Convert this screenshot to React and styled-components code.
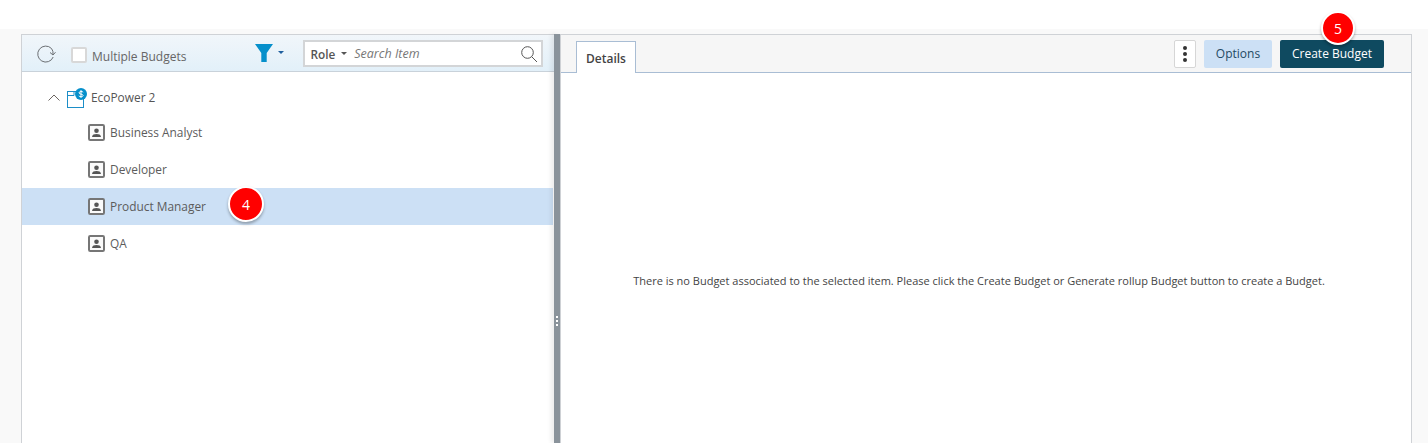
import React from "react";
import styled, { createGlobalStyle } from "styled-components";

const Global = createGlobalStyle`
  html, body { margin: 0; padding: 0; background: #fff; height: 100%; overflow: hidden; }
  body { font-family: "Open Sans", "Liberation Sans", sans-serif; color: #555; }
  * { box-sizing: border-box; }
`;
const Page = styled.div`display: flex; flex-direction: column; height: 443px; width: 1428px; overflow: hidden;`;
const TopStrip = styled.div`height: 29px; background: #fff; flex: none;`;
const Workspace = styled.div`flex: 1; display: flex; min-height: 0; background: #f9f9f9; padding: 5px 16px 0 21px;`;
const LeftPanel = styled.section`width: 533px; flex: none; display: flex; flex-direction: column; background: #fff; border: 1px solid #cfd2d6; border-right: none; border-bottom: none;`;
const LeftBar = styled.div`height: 37px; flex: none; display: flex; align-items: center; background: linear-gradient(to bottom, #f1f6fa, #e2f0f9); border-bottom: 1px solid #c9d2da; position: relative; padding-left: 15px;`;
const Check = styled.span`width: 16px; height: 16px; margin-left: 15px; margin-top: 4px; background: #fff; border: 2px solid #d8d8d8; border-radius: 2px;`;
const CheckLabel = styled.span`font-size: 12px; margin-left: 5px; margin-top: 7px; color: #666;`;
const FilterBtn = styled.div`margin-left: 69px; margin-top: -1px; display: flex; align-items: center; gap: 5px;`;
const Search = styled.div`width: 240px; height: 27px; margin-left: 19px; margin-top: 1px; background: #fff; border: 2px solid #d3d5d7; display: flex; align-items: center; padding: 0 3px 0 5px;`;
const RoleLabel = styled.span`font-size: 11.8px; font-weight: 600; color: #555;`;
const Caret = styled.span`width: 0; height: 0; border-left: 3px solid transparent; border-right: 3px solid transparent; border-top: 3px solid ${p => p.$color || "#555"}; display: inline-block;`;
const SearchHint = styled.span`flex: 1; font-size: 12.5px; font-style: italic; color: #777; margin-left: 7px;`;
const Tree = styled.div`flex: 1; padding-top: 7px;`;
const RootRow = styled.div`height: 37px; display: flex; align-items: center; padding-left: 26px; font-size: 11.9px; color: #555;`;
const RootLabel = styled.span`margin-left: 4px; margin-bottom: 1px;`;
const Row = styled.div`height: 37px; margin-top: ${p => p.$first ? "-2px" : 0}; margin-right: 1px; display: flex; align-items: center; padding-left: 66px; font-size: 11.9px; color: #5c5c5c; position: relative; background: ${p => p.$selected ? "#cce0f5" : "transparent"};`;
const RowLabel = styled.span`margin-left: 5px; margin-bottom: 2px;`;
const Badge = styled.span`position: absolute; border-radius: 50%; background: #f00; border: 2px solid #fff; color: #fff; font-size: 14px; display: flex; align-items: center; justify-content: center; box-shadow: 0 2px 3px rgba(0,0,0,.3);`;
const RowBadge = styled(Badge)`width: 36px; height: 36px; left: 206px; top: -2px;`;
const Splitter = styled.div`width: 6px; flex: none; background: #8a939b; position: relative; display: flex; flex-direction: column; align-items: center; justify-content: center; gap: 2px; padding-top: 164px; box-shadow: -3px 0 4px rgba(0,0,0,.08); margin-right: 1px;`;
const Dot = styled.span`width: 2px; height: 2px; background: #fff;`;
const RightPanel = styled.section`flex: 1; min-width: 0; display: flex; flex-direction: column; background: #fff; border: 1px solid #cfd2d6; border-bottom: none; margin-left: -1px;`;
const RightBar = styled.div`height: 38px; flex: none; display: flex; align-items: flex-end; background: #f6f6f6; border-bottom: 1px solid #a9bdd4; padding-left: 15px; padding-right: 27px;`;
const Tab = styled.div`height: 32px; width: 60px; background: #fff; border: 1px solid #a9bdd4; border-bottom: none; font-size: 12px; font-weight: 600; color: #444; display: flex; align-items: center; justify-content: center; margin-bottom: -1px; padding-top: 1px;`;
const Actions = styled.div`margin-left: auto; align-self: flex-start; padding-top: 5px; display: flex; align-items: center; position: relative;`;
const Kebab = styled.div`width: 22px; height: 28px; background: #fff; border: 1px solid #d6d6d6; border-radius: 2px; display: flex; flex-direction: column; align-items: center; justify-content: center; gap: 2px;`;
const KebabDot = styled.span`width: 4px; height: 4px; border-radius: 50%; background: #333;`;
const OptionsBtn = styled.button`height: 28px; width: 68px; margin-left: 8px; background: #cce0f5; color: #1f4a63; border: none; border-radius: 2px; font: 12px "Open Sans", sans-serif; padding: 0 0 2px;`;
const CreateBtn = styled.button`height: 28px; width: 104px; margin-left: 8px; background: #0f4a60; color: #fff; border: none; border-radius: 2px; font: 12px "Open Sans", sans-serif; padding: 0 0 2px;`;
const TopBadge = styled(Badge)`width: 34px; height: 34px; right: 29px; top: -24px; z-index: 0;`;
const Body = styled.div`flex: 1; display: flex; align-items: center; justify-content: center; font-size: 11px; color: #444; padding-top: 44px; padding-right: 14px;`;
const Message = styled.p`margin: 0;`;

const PersonIcon = () => (
  <svg width="17" height="17" viewBox="0 0 17 17" fill="none">
    <rect x="1" y="1" width="15" height="15" rx="1.2" stroke="#767676" strokeWidth="2" fill="#fafafa" />
    <circle cx="8.5" cy="6.8" r="2.3" fill="#555" />
    <path d="M4 13c.3-2.4 2-3 4.500-3s4.200.6 4.500 3z" fill="#555" />
  </svg>
);
const Refresh = () => (
  <svg width="19" height="19" viewBox="0 0 19 19" fill="none" stroke="#6b6f73" strokeWidth="1">
    <path d="M16.200 13A8 8 0 1 1 14.500 4.500Q16.500 7 16 10.500" />
    <path d="M13 8.500l3 2.500 2.500-2.800" />
  </svg>
);
const Funnel = () => (
  <svg width="18" height="18" viewBox="0 0 18 18"><path d="M0 0h18l-6.300 9v9h-5.400V9z" fill="#0690cb" /></svg>
);
const Magnifier = () => (
  <svg width="18" height="18" viewBox="0 0 18 18" fill="none" stroke="#555" strokeWidth="1">
    <circle cx="7.500" cy="7.500" r="5.800" />
    <path d="M11.700 11.700l5.300 5.300" />
  </svg>
);
const Chevron = () => (
  <svg width="12" height="7" viewBox="0 0 12 7" fill="none" stroke="#6b6460" strokeWidth="1"><path d="M.5 6.500l5.500-5.500 5.500 5.500" /></svg>
);
const ProjectIcon = () => (
  <svg width="20" height="20" viewBox="0 0 20 20" fill="none" style={{ marginLeft: 7 }}>
    <rect x="0.500" y="3.500" width="16" height="16" fill="#fff" stroke="#1c8ec8" strokeWidth="1" />
    <path d="M.5 7.500h6.500V3.500" stroke="#1c8ec8" strokeWidth="1" />
    <circle cx="14" cy="6" r="6" fill="#0690cb" />
    <path d="M16.200 4.200c-.5-.9-4.200-1.100-4.200.7 0 1.600 4.100.8 4.100 2.600 0 1.700-3.700 1.400-4.300.4M14 2.100v7.800" stroke="#fff" strokeWidth="1" />
  </svg>
);

const roles = ["Business Analyst", "Developer", "Product Manager", "QA"];

export default function App() {
  return (
    <Page>
      <Global />
      <TopStrip />
      <Workspace>
        <LeftPanel>
          <LeftBar>
            <Refresh />
            <Check />
            <CheckLabel>Multiple Budgets</CheckLabel>
            <FilterBtn><Funnel /><Caret $color="#1f5f9e" /></FilterBtn>
            <Search>
              <RoleLabel>Role</RoleLabel>
              <Caret style={{ marginLeft: 6 }} />
              <SearchHint>Search Item</SearchHint>
              <Magnifier />
            </Search>
          </LeftBar>
          <Tree>
            <RootRow><Chevron /><ProjectIcon /><RootLabel>EcoPower 2</RootLabel></RootRow>
            {roles.map((r, i) => (
              <Row key={r} $first={i === 0} $selected={r === "Product Manager"}>
                <PersonIcon />
                <RowLabel>{r}</RowLabel>
                {r === "Product Manager" && <RowBadge>4</RowBadge>}
              </Row>
            ))}
          </Tree>
        </LeftPanel>
        <Splitter><Dot /><Dot /><Dot /></Splitter>
        <RightPanel>
          <RightBar>
            <Tab>Details</Tab>
            <Actions>
              <Kebab><KebabDot /><KebabDot /><KebabDot /></Kebab>
              <OptionsBtn>Options</OptionsBtn>
              <CreateBtn>Create Budget</CreateBtn>
              <TopBadge>5</TopBadge>
            </Actions>
          </RightBar>
          <Body>
            <Message>There is no Budget associated to the selected item. Please click the Create Budget or Generate rollup Budget button to create a Budget.</Message>
          </Body>
        </RightPanel>
      </Workspace>
    </Page>
  );
}
